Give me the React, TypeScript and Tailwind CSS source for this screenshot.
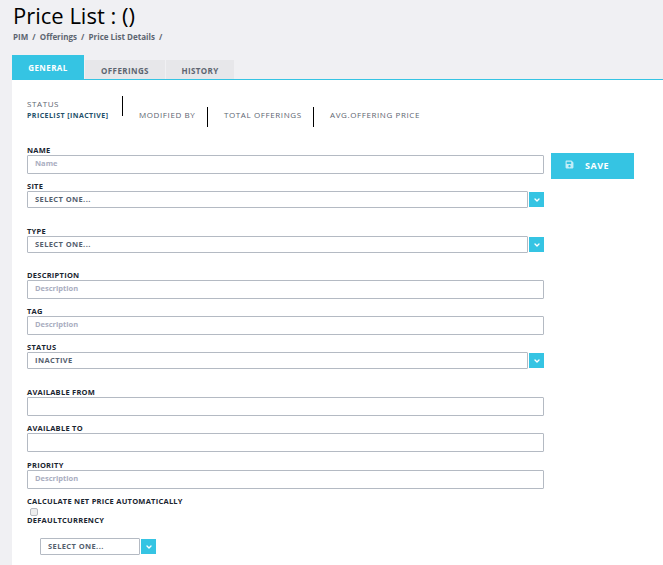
import { FiChevronDown } from "react-icons/fi";
import { FaSave } from "react-icons/fa";

const labelClass =
  "block h-[9px] text-[7.5px] leading-[9px] font-bold tracking-[0.25px] text-[#1a2530] uppercase";

function TextField({
  label,
  placeholder,
  className,
}: {
  label: string;
  placeholder?: string;
  className?: string;
}) {
  return (
    <div className={className}>
      <label className={labelClass}>{label}</label>
      <div className="h-[19px] w-[517px] border border-[#b4bac3] rounded-[1px] pl-[7px] text-[7.5px] leading-[15px] font-bold text-[#a9adc0]">
        {placeholder}
      </div>
    </div>
  );
}

function SelectBox({ value, width }: { value: string; width: string }) {
  return (
    <div className="flex items-start">
      <div
        className={`${width} h-[17px] border border-[#b4bac3] rounded-[1px] pl-[7px] text-[7.5px] leading-[15px] font-bold tracking-[0.4px] text-[#55606e]`}
      >
        {value}
      </div>
      <div className="ml-[1px] mt-[1px] flex h-[15px] w-[15px] items-center justify-center bg-[#35c4e3] text-white">
        <FiChevronDown size={8} strokeWidth={4} />
      </div>
    </div>
  );
}

function SelectField({
  label,
  value,
  className,
}: {
  label: string;
  value: string;
  className?: string;
}) {
  return (
    <div className={className}>
      <label className={labelClass}>{label}</label>
      <SelectBox value={value} width="w-[501px]" />
    </div>
  );
}

export default function App() {
  return (
    <div
      className="h-[565px] w-[663px] overflow-hidden bg-[#f0f0f3]"
      style={{ fontFamily: '"Open Sans", "Liberation Sans", sans-serif' }}
    >
      {/* Header */}
      <div className="h-[55px] pl-[13px]">
        <h1 className="pt-[2px] text-[22px] leading-[26px] font-normal text-black">
          Price List : ()
        </h1>
        <div className="mt-[4px] text-[8px] leading-[10px] font-bold text-[#5d6570]">
          PIM&nbsp; / &nbsp;Offerings&nbsp; / &nbsp;Price List Details&nbsp; /
        </div>
      </div>

      {/* Tabs */}
      <div className="flex h-[24px] items-end pl-[12px] text-[8px] font-bold tracking-[0.4px]">
        <div className="flex h-[24px] w-[72px] items-start justify-center bg-[#35c4e3] pt-[8px] leading-[10px] text-white">
          GENERAL
        </div>
        <div className="ml-[1px] flex h-[19px] w-[80px] items-start justify-center bg-[#e7e7ea] pt-[6px] leading-[10px] text-[#5d6570]">
          OFFERINGS
        </div>
        <div className="ml-[1px] flex h-[19px] w-[68px] items-start justify-center bg-[#e7e7ea] pt-[6px] leading-[10px] text-[#5d6570]">
          HISTORY
        </div>
      </div>

      {/* Panel */}
      <div className="ml-[12px] h-[486px] border-t border-[#35c4e3] bg-white pl-[15px]">
        <div className="flex h-[51px] items-start pt-[16px] text-[8px] leading-[10px] tracking-[0.6px] text-[#5d6570]">
          <div className="h-[20px] w-[96px] border-r border-black pt-[3px]">
            <div>STATUS</div>
            <div className="mt-[2px] text-[7px] font-bold tracking-[0.45px] text-[#24506a]">
              PRICELIST [INACTIVE]
            </div>
          </div>
          <div className="mt-[11px] h-[20px] w-[85px] border-r border-black pl-[16px] pt-[3px]">
            MODIFIED BY
          </div>
          <div className="mt-[11px] h-[20px] w-[106px] border-r border-black pl-[16px] pt-[3px]">
            TOTAL OFFERINGS
          </div>
          <div className="mt-[11px] pl-[16px] pt-[3px]">AVG.OFFERING PRICE</div>
        </div>

        <div className="mt-[15px] flex h-[28px] items-start">
          <TextField label="Name" placeholder="Name" />
          <button className="ml-[7px] mt-[7px] flex h-[26px] w-[83px] shrink-0 items-center bg-[#35c4e3] pl-[14px] text-[9px] font-bold tracking-[0.5px] text-white">
            <FaSave size={9} className="-mt-[3px] text-[#c4eef8]" />
            <span className="ml-[11px]">SAVE</span>
          </button>
        </div>
        <SelectField className="mt-[8px]" label="Site" value="SELECT ONE..." />
        <SelectField className="mt-[19px]" label="Type" value="SELECT ONE..." />
        <TextField className="mt-[18px]" label="Description" placeholder="Description" />
        <TextField className="mt-[8px]" label="Tag" placeholder="Description" />
        <SelectField className="mt-[8px]" label="Status" value="INACTIVE" />
        <TextField className="mt-[19px]" label="Available From" />
        <TextField className="mt-[8px]" label="Available To" />
        <TextField className="mt-[9px]" label="Priority" placeholder="Description" />
        <label className={`${labelClass} mt-[8px]`}>Calculate Net Price Automatically</label>
        <input
          type="checkbox"
          className="mt-[2px] ml-[3px] block h-[8px] w-[8px] appearance-none rounded-[2px] border border-[#b9bcc2] bg-[#eeeeee]"
        />
        <label className={labelClass}>DefaultCurrency</label>
        <div className="mt-[13px] ml-[13px]">
          <SelectBox value="SELECT ONE..." width="w-[100px]" />
        </div>
      </div>
    </div>
  );
}
